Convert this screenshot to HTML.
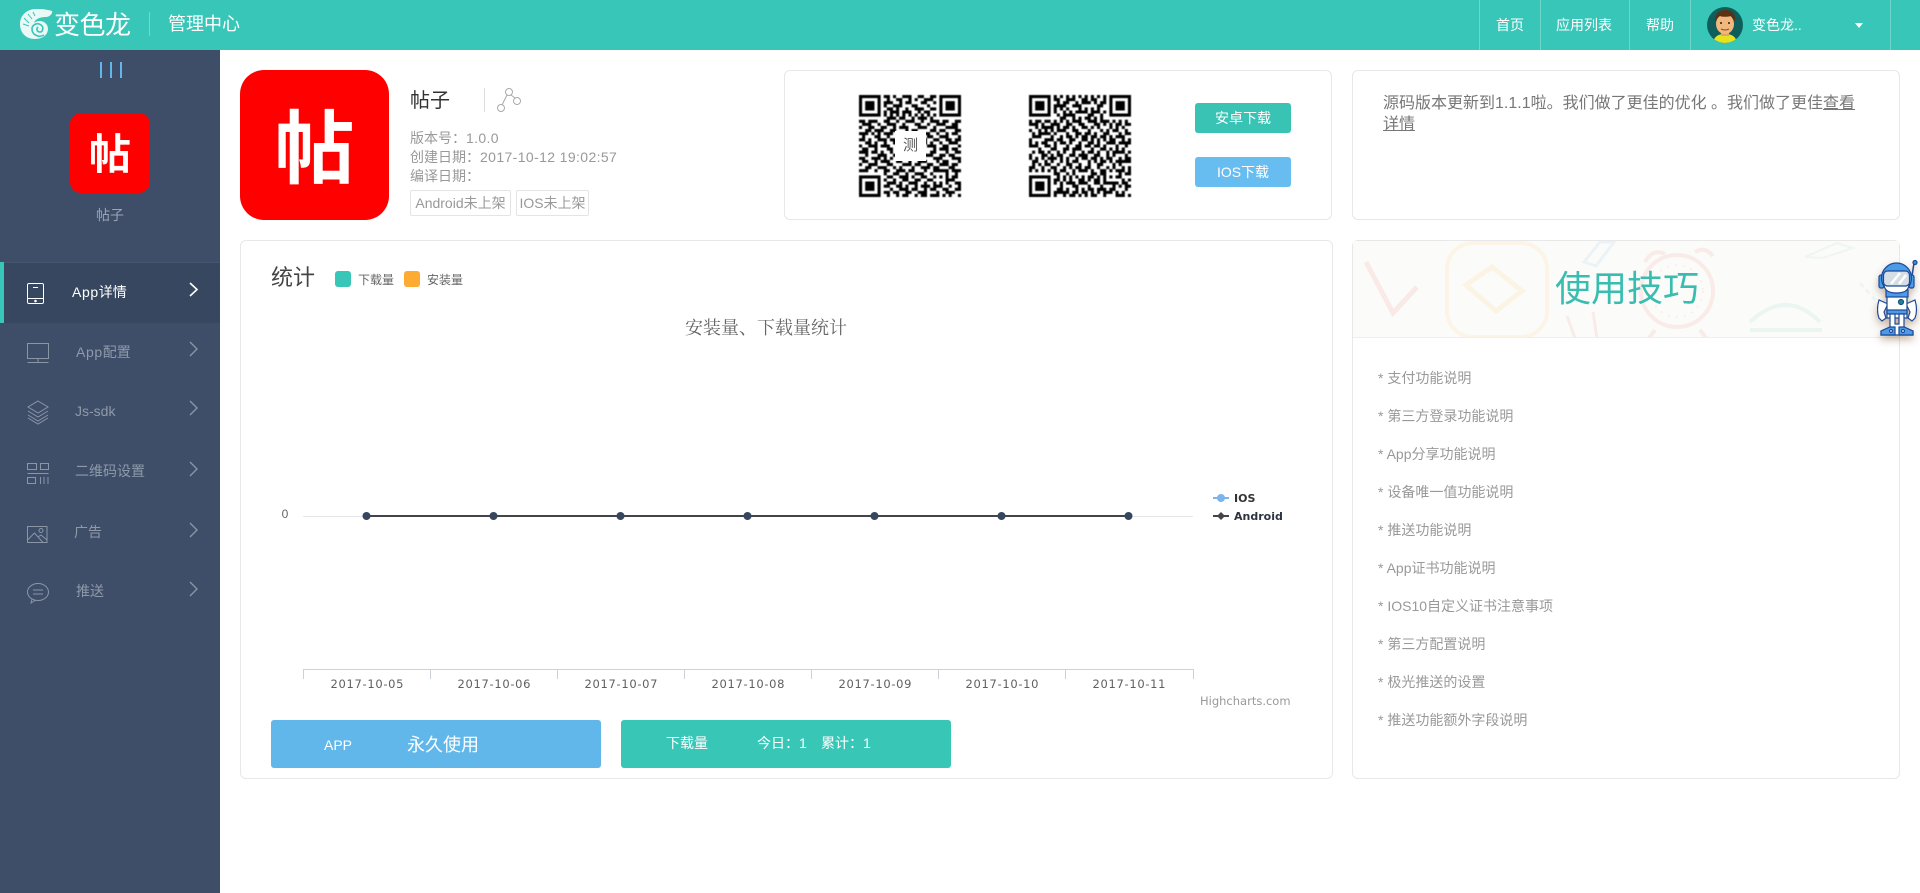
<!DOCTYPE html>
<html lang="zh"><head><meta charset="utf-8"><title>管理中心</title>
<style>
html,body{margin:0;padding:0;width:1920px;height:893px;overflow:hidden;background:#fff}
body{position:relative;font-family:"Liberation Sans","Noto Sans CJK SC",sans-serif;font-size:14px;color:#666}
.a,.t,svg.a{position:absolute}
.t{white-space:nowrap;line-height:20px}
.c{font-family:"Noto Sans CJK TC",sans-serif}
.card{position:absolute;box-sizing:border-box;border:1px solid #e8e8e8;border-radius:6px;background:#fff}
.hd{position:absolute;left:0;top:0;width:1920px;height:50px;background:#38c6b8}
.vl{position:absolute;top:0;width:1px;height:50px;background:#6fd6cc}
.sb{position:absolute;left:0;top:50px;width:220px;height:843px;background:#3e4e69}
.w{color:#fff}
.m{color:#8f99a9;font-size:14px}
.l{color:#999;font-size:14px}
.tag{position:absolute;box-sizing:border-box;top:190px;height:26px;border:1px solid #e4e4e4;border-radius:2px;color:#999;font-size:14px;line-height:24px;text-align:center;white-space:nowrap}
.btn{position:absolute;left:1195px;width:96px;height:30px;border-radius:3px;color:#fff;font-size:14px;line-height:30px;text-align:center}
.bar{position:absolute;top:720px;width:330px;height:48px;border-radius:3px}
.ls{letter-spacing:.6px}
</style></head><body>

<div class="hd"></div>
<svg class="a" style="left:20px;top:9px" width="33" height="31" viewBox="0 0 33 31">
<path d="M15 30C6 30 0 24 0 15 0 7 6 1 14 0c5-.5 11 0 18 2 1 2-2 6-6 6-6 0-11 2-12 6 3-3 10-3 13 2 3 6-1 14-12 14z" fill="#eaf8f6"/>
<path d="M24 26c-5 3-12 0-12-6 0-4 5-7 9-4 3 2 2 7-1 7s-4-3-2-5" fill="none" stroke="#38c6b8" stroke-width="1.6"/>
<path d="M4 9l5 5M8 5l4 5M3 15l6 2M13 3l2 4" stroke="#38c6b8" stroke-width="1"/>
</svg>
<div class="t w" style="left:54px;top:10px;font-size:26px;line-height:30px;letter-spacing:-.5px">变色龙</div>
<div class="a" style="left:149px;top:12px;width:1px;height:24px;background:#74d8ce"></div>
<div class="t w" style="left:168px;top:14px;font-size:18px">管理中心</div>

<div class="vl" style="left:1479px"></div><div class="vl" style="left:1540px"></div><div class="vl" style="left:1629px"></div><div class="vl" style="left:1690px"></div><div class="vl" style="left:1890px"></div>
<div class="t w" style="left:1496px;top:15px">首页</div>
<div class="t w" style="left:1556px;top:15px">应用列表</div>
<div class="t w" style="left:1646px;top:15px">帮助</div>
<svg class="a" style="left:1707px;top:7px" width="36" height="36" viewBox="0 0 36 36">
<defs><clipPath id="av"><circle cx="18" cy="18" r="18"/></clipPath></defs>
<g clip-path="url(#av)"><rect width="36" height="36" fill="#0e5f5c"/>
<path d="M6 36c1-7 6-9 12-9s11 2 12 9z" fill="#e8e21c"/>
<rect x="14" y="22" width="8" height="7" fill="#e3a468"/>
<ellipse cx="18" cy="17" rx="9" ry="10" fill="#f1b77c"/>
<path d="M8 15C8 5 14 3 19 3c6 0 10 4 9 12-2-3-3-5-4-6-4 1-9 1-11 0-2 1-3 3-5 6z" fill="#5b3014"/>
<circle cx="14" cy="16" r="1" fill="#222"/><circle cx="22" cy="16" r="1" fill="#222"/>
<path d="M14 22q4 2 8 0" stroke="#8a4b22" fill="none"/></g></svg>
<div class="t w" style="left:1752px;top:15px">变色龙..</div>
<div class="a" style="left:1855px;top:23px;width:0;height:0;border:4px solid transparent;border-top:5px solid #fff;border-bottom:0"></div>

<div class="sb"></div>
<div class="a" style="left:100px;top:62px;width:2px;height:16px;background:#62b7ea"></div>
<div class="a" style="left:110px;top:62px;width:2px;height:16px;background:#62b7ea"></div>
<div class="a" style="left:120px;top:62px;width:2px;height:16px;background:#62b7ea"></div>
<div class="a" style="left:70px;top:113px;width:80px;height:80px;border-radius:11px;background:#fe0000;color:#fff;font:700 42px/78px 'Noto Sans CJK SC',sans-serif;text-align:center">帖</div>
<div class="t" style="left:96px;top:205px;color:#9ba4b3;font-size:14px">帖子</div>

<div class="a" style="left:0;top:262px;width:220px;height:61px;background:#36475f;border-top:1px solid #475670;box-sizing:border-box"></div>
<div class="a" style="left:0;top:262px;width:4px;height:61px;background:#38c6b8"></div>

<svg class="a" style="left:0;top:270px" width="220" height="350" viewBox="0 270 220 350" fill="none" stroke="#8a95a6" stroke-width="1">
<g stroke="#fff"><rect x="27.5" y="283.5" width="16" height="20" rx="1.5"/><path d="M33 287.5h5M27.5 298.5h16"/><circle cx="35.5" cy="301" r=".8" fill="#fff"/><path d="M190 283l7 6.5-7 6.5" stroke-width="1.6"/></g>
<rect x="27.5" y="343.5" width="21" height="15"/><path d="M38 358.5v4M27.5 362.5h21"/>
<path d="M38 401l10 6-10 6-10-6zM28 411l10 6 10-6M28 415l10 6 10-6M28 418l10 6 10-6"/>
<path d="M27.5 463.5h9v6h-9zM40.5 463.5h8v6h-8zM27.5 473.5h21M27.5 477.5h8v6h-8zM40.5 477v7M44 477v7M48 477v7"/>
<rect x="27.5" y="526.5" width="19.5" height="16"/><circle cx="41" cy="530.5" r="2"/><path d="M27.5 540l7-7 8 9M38 537l3-2 6 5"/>
<ellipse cx="38" cy="592" rx="10.5" ry="8.5"/><path d="M32 599l-1 4 5-3M33 590h10M33 594h10"/>
<g stroke-width="1.4"><path d="M190 342l7 7-7 7M190 401l7 7-7 7M190 462l7 7-7 7M190 523l7 7-7 7M190 582l7 7-7 7"/></g>
</svg>
<div class="t w" style="left:72px;top:282px;font-size:14px"><span class="ls">App</span>详情</div>
<div class="t m" style="left:76px;top:342px"><span class="ls">App</span>配置</div>
<div class="t m" style="left:75px;top:401px">Js-sdk</div>
<div class="t m" style="left:75px;top:461px">二维码设置</div>
<div class="t m" style="left:74px;top:522px">广告</div>
<div class="t m" style="left:76px;top:581px">推送</div>

<div class="a" style="left:240px;top:70px;width:149px;height:150px;border-radius:24px;background:#fe0000;color:#fff;font:700 80px/146px 'Noto Sans CJK SC',sans-serif;text-align:center">帖</div>
<div class="t" style="left:410px;top:91px;font-size:20px;color:#333">帖子</div>
<div class="a" style="left:484px;top:88px;width:1px;height:24px;background:#ddd"></div>
<svg class="a" style="left:495px;top:86px" width="28" height="28" viewBox="495 86 28 28" fill="none" stroke="#aaa"><circle cx="509" cy="92" r="3.5"/><circle cx="517" cy="101" r="3.5"/><circle cx="501" cy="108" r="3.5"/><path d="M511 95l4 3M507 95l-5 10"/></svg>
<div class="t l" style="left:410px;top:128px">版本号<span class="c">：</span><span style="letter-spacing:.35px">1.0.0</span></div>
<div class="t l" style="left:410px;top:147px">创建日期<span class="c">：</span><span style="letter-spacing:.38px">2017-10-12 19:02:57</span></div>
<div class="t l" style="left:410px;top:166px">编译日期<span class="c">：</span></div>
<div class="tag" style="left:410px;width:101px">Android未上架</div>
<div class="tag" style="left:516px;width:73px">IOS未上架</div>

<div class="card" style="left:784px;top:70px;width:548px;height:150px"></div>
<svg width="0" height="0" style="position:absolute"><defs>
<g id="qr">
<path fill="#000" fill-rule="evenodd" d="M0 0h7v7H0zM1 1v5h5V1zM2 2h3v3H2zM26 0h7v7h-7zM27 1v5h5V1zM28 2h3v3h-3zM0 26h7v7H0zM1 27v5h5v-5zM2 28h3v3H2z"/>
<path stroke="#000" stroke-width="1" fill="none" d="M8 .5h2M11 .5h1M14 .5h3M19 .5h2M23 .5h2M9 1.5h1M12 1.5h2M16 1.5h1M18 1.5h1M21 1.5h3M8 2.5h3M13 2.5h1M15 2.5h2M20 2.5h2M24 2.5h1M8 3.5h1M11 3.5h3M17 3.5h2M22 3.5h1M9 4.5h2M12 4.5h1M15 4.5h1M18 4.5h3M23 4.5h2M8 5.5h1M10 5.5h3M14 5.5h3M19 5.5h1M21 5.5h2M8 6.5h1M10 6.5h1M12 6.5h1M14 6.5h1M16 6.5h1M18 6.5h1M20 6.5h1M22 6.5h1M24 6.5h1M9 7.5h3M13 7.5h2M17 7.5h1M19 7.5h3M23 7.5h1
M0 8.5h2M3 8.5h3M8 8.5h2M12 8.5h1M15 8.5h3M20 8.5h1M23 8.5h3M27 8.5h2M31 8.5h2M1 9.5h3M6 9.5h1M9 9.5h3M14 9.5h1M18 9.5h2M22 9.5h1M25 9.5h3M30 9.5h2M0 10.5h1M3 10.5h2M7 10.5h2M11 10.5h1M13 10.5h3M19 10.5h3M24 10.5h1M28 10.5h4M2 11.5h2M5 11.5h3M10 11.5h2M15 11.5h1M17 11.5h2M23 11.5h2M26 11.5h2M31 11.5h2M0 12.5h3M4 12.5h1M6 12.5h1M8 12.5h3M12 12.5h2M16 12.5h2M20 12.5h3M25 12.5h1M28 12.5h1M30 12.5h2M1 13.5h1M5 13.5h2M9 13.5h1M13 13.5h3M19 13.5h1M22 13.5h2M26 13.5h3M32 13.5h1
M0 14.5h2M3 14.5h1M6 14.5h3M10 14.5h2M14 14.5h1M17 14.5h3M21 14.5h1M24 14.5h2M28 14.5h2M31 14.5h2M2 15.5h2M5 15.5h1M8 15.5h1M11 15.5h3M16 15.5h2M20 15.5h2M23 15.5h1M26 15.5h1M29 15.5h3M0 16.5h1M3 16.5h3M7 16.5h3M12 16.5h1M15 16.5h3M19 16.5h1M22 16.5h3M27 16.5h2M32 16.5h1M1 17.5h2M5 17.5h1M9 17.5h2M13 17.5h2M18 17.5h3M24 17.5h1M26 17.5h3M30 17.5h2M0 18.5h3M4 18.5h2M7 18.5h1M10 18.5h1M12 18.5h3M16 18.5h1M19 18.5h2M23 18.5h2M28 18.5h1M31 18.5h2M2 19.5h1M6 19.5h3M11 19.5h2M15 19.5h2M18 19.5h1M21 19.5h3M26 19.5h2M29 19.5h2M0 20.5h2M4 20.5h3M8 20.5h1M10 20.5h1M13 20.5h3M17 20.5h2M20 20.5h1M24 20.5h3M30 20.5h3
M1 21.5h2M5 21.5h1M7 21.5h3M12 21.5h2M16 21.5h1M19 21.5h3M25 21.5h1M27 21.5h2M32 21.5h1M0 22.5h1M3 22.5h3M9 22.5h2M14 22.5h3M18 22.5h2M22 22.5h2M26 22.5h3M30 22.5h2M2 23.5h2M6 23.5h3M11 23.5h1M13 23.5h1M17 23.5h1M20 23.5h3M24 23.5h2M29 23.5h2M0 24.5h3M5 24.5h1M8 24.5h2M12 24.5h3M16 24.5h2M21 24.5h1M24 24.5h5M30 24.5h3M8 25.5h1M11 25.5h2M15 25.5h1M18 25.5h3M23 25.5h1M28 25.5h1M31 25.5h1M9 26.5h2M13 26.5h3M17 26.5h1M20 26.5h2M24 26.5h1M26 26.5h1M28 26.5h1M30 26.5h2M8 27.5h1M11 27.5h1M14 27.5h2M18 27.5h2M22 27.5h2M28 27.5h3M9 28.5h3M13 28.5h1M16 28.5h3M21 28.5h1M24 28.5h1M26 28.5h1M28 28.5h1M31 28.5h2
M8 29.5h2M12 29.5h2M15 29.5h1M18 29.5h1M20 29.5h3M24 29.5h3M29 29.5h1M32 29.5h1M10 30.5h1M13 30.5h3M17 30.5h2M21 30.5h1M23 30.5h2M27 30.5h2M31 30.5h2M8 31.5h2M11 31.5h2M15 31.5h2M19 31.5h3M25 31.5h1M28 31.5h3M9 32.5h1M12 32.5h1M14 32.5h2M18 32.5h1M20 32.5h2M23 32.5h3M27 32.5h1M29 32.5h1M32 32.5h1"/>
</g></defs></svg>
<svg class="a" style="left:859px;top:95px;filter:blur(.4px)" width="102" height="102" viewBox="0 0 33 33"><use href="#qr"/></svg>
<div class="a" style="left:895px;top:131px;width:31px;height:30px;background:#fff;color:#555;font-size:15px;line-height:30px;text-align:center">测</div>
<svg class="a" style="left:1029px;top:95px;filter:blur(.4px)" width="102" height="102" viewBox="0 0 33 33"><g transform="matrix(0 1 1 0 0 0)"><use href="#qr"/></g></svg>
<div class="btn" style="top:103px;background:#38c3b4">安卓下载</div>
<div class="btn" style="top:157px;background:#67bdf0">IOS下载</div>

<div class="card" style="left:1352px;top:70px;width:548px;height:150px"></div>
<div class="a" style="left:1383px;top:93px;width:490px;font-size:16px;line-height:21px;color:#777;white-space:nowrap">源码版本更新到1.1.1啦。我们做了更佳的优化 。我们做了更佳<u>查看<br>详情</u></div>

<div class="card" style="left:240px;top:240px;width:1093px;height:539px"></div>
<div class="t" style="left:271px;top:265px;font-size:22px;line-height:26px;color:#444">统计</div>
<div class="a" style="left:335px;top:271px;width:16px;height:16px;border-radius:3px;background:#38c6b8"></div>
<div class="t" style="left:358px;top:270px;font-size:12px;color:#666">下载量</div>
<div class="a" style="left:404px;top:271px;width:16px;height:16px;border-radius:3px;background:#fdab33"></div>
<div class="t" style="left:427px;top:270px;font-size:12px;color:#666">安装量</div>

<svg class="a" style="left:0;top:0" width="1920" height="893" viewBox="0 0 1920 893" fill="none">
<text x="766" y="334" text-anchor="middle" font-family="'Liberation Serif','Noto Serif CJK SC',serif" font-size="18" fill="#666">安装量、下载量统计</text>
<path d="M303 516.5h890" stroke="#e6e6e6"/>
<text x="285" y="518" text-anchor="middle" font-family="'Liberation Sans',sans-serif" font-size="12" fill="#666">0</text>
<path d="M366.5 516h762" stroke="#434348" stroke-width="2"/>
<g fill="#36465f"><circle cx="366.5" cy="516" r="4"/><circle cx="493.5" cy="516" r="4"/><circle cx="620.5" cy="516" r="4"/><circle cx="747.5" cy="516" r="4"/><circle cx="874.5" cy="516" r="4"/><circle cx="1001.5" cy="516" r="4"/><circle cx="1128.5" cy="516" r="4"/></g>
<path d="M303.5 669.5h890M303.5 669v10M430.5 669v10M557.5 669v10M684.5 669v10M811.5 669v10M938.5 669v10M1065.5 669v10M1193.5 669v10" stroke="#ccd2da"/>
<g font-family="'DejaVu Sans',sans-serif" font-size="11.5" fill="#606060" text-anchor="middle">
<text x="367" y="688" textLength="73">2017-10-05</text><text x="494" y="688" textLength="73">2017-10-06</text><text x="621" y="688" textLength="73">2017-10-07</text><text x="748" y="688" textLength="73">2017-10-08</text><text x="875" y="688" textLength="73">2017-10-09</text><text x="1002" y="688" textLength="73">2017-10-10</text><text x="1129" y="688" textLength="73">2017-10-11</text>
</g>
<path d="M1213 498h16" stroke="#7cb5ec" stroke-width="2"/><circle cx="1221" cy="498" r="4" fill="#7cb5ec"/>
<path d="M1213 516h16" stroke="#434348" stroke-width="2"/><path d="M1221 512l4 4-4 4-4-4z" fill="#434348"/>
<g font-family="'DejaVu Sans',sans-serif" font-size="11" font-weight="700" fill="#333"><text x="1234" y="502">IOS</text><text x="1234" y="520" fill="#2c3442">Android</text></g>
<text x="1200" y="705" font-family="'DejaVu Sans',sans-serif" font-size="11.5" fill="#999">Highcharts.com</text>
</svg>

<div class="bar" style="left:271px;background:#62b7ea"></div>
<div class="t w" style="left:324px;top:735px;font-size:14px">APP</div>
<div class="t w" style="left:407px;top:735px;font-size:18px">永久使用</div>
<div class="bar" style="left:621px;background:#38c6b6"></div>
<div class="t w" style="left:666px;top:733px;font-size:14px">下载量</div>
<div class="t w" style="left:757px;top:733px;font-size:14px">今日<span class="c">：</span>1</div>
<div class="t w" style="left:821px;top:733px;font-size:14px">累计<span class="c">：</span>1</div>

<div class="card" style="left:1352px;top:240px;width:548px;height:539px"></div>
<svg class="a" style="left:1353px;top:241px" width="546" height="97" viewBox="1353 241 546 97" fill="none">
<rect x="1353" y="241" width="546" height="97" fill="#fbfbf9"/>
<g opacity=".55">
<path d="M1366 262l27 51 24-26" stroke="#f9dcd9" stroke-width="5"/>
<rect x="1447" y="243" width="100" height="94" rx="26" stroke="#fbf0d9" stroke-width="4"/>
<path d="M1466 285l26-18 30 24-26 20z" stroke="#fbefd4" stroke-width="5"/>
<circle cx="1677" cy="291" r="36" stroke="#f9dedb" stroke-width="4"/><circle cx="1677" cy="291" r="26" stroke="#f9e6e3" stroke-width="2" stroke-dasharray="2 6"/>
<path d="M1645 262q8-14 20-8M1695 252q10-6 18 4M1655 330l-6 8M1700 330l6 8" stroke="#f9dedb" stroke-width="4"/>
<path d="M1584 262l16-20h14l-18 24z" stroke="#dfeef6" stroke-width="3"/>
<path d="M1750 322q36-34 70 0M1750 330h72" stroke="#dff2ee" stroke-width="4"/>
<path d="M1805 257l32-14 16 5-30 10z" stroke="#e4f3f0" stroke-width="2"/>
<path d="M1575 338l-8-22M1597 338l-4-26" stroke="#f9dedb" stroke-width="3"/>
<path d="M1860 283l30 34" stroke="#e3f1f6" stroke-width="3" stroke-dasharray="5 4"/>
</g>
<path d="M1353 337.500h546" stroke="#eee"/>
</svg>
<div class="t" style="left:1555px;top:267px;font-size:36px;line-height:44px;color:#38bdb0">使用技巧</div>
<div class="t l" style="left:1378px;top:368px">* 支付功能说明</div>
<div class="t l" style="left:1378px;top:406px">* 第三方登录功能说明</div>
<div class="t l" style="left:1378px;top:444px">* App分享功能说明</div>
<div class="t l" style="left:1378px;top:482px">* 设备唯一值功能说明</div>
<div class="t l" style="left:1378px;top:520px">* 推送功能说明</div>
<div class="t l" style="left:1378px;top:558px">* App证书功能说明</div>
<div class="t l" style="left:1378px;top:596px">* IOS10自定义证书注意事项</div>
<div class="t l" style="left:1378px;top:634px">* 第三方配置说明</div>
<div class="t l" style="left:1378px;top:672px">* 极光推送的设置</div>
<div class="t l" style="left:1378px;top:710px">* 推送功能额外字段说明</div>

<svg class="a" style="left:1877px;top:260px;filter:drop-shadow(0 4px 4px rgba(130,90,50,.45))" width="41" height="78" viewBox="0 0 41 78" fill="none" stroke="#1f4a96" stroke-width="1.2">
<path d="M35 16l2-13" stroke-width="1.5"/><circle cx="38" cy="2.500" r="2" fill="#3e8fe0"/>
<path d="M2 40q-3 10 0 18l3 3 4-3-2-6 4-8z" fill="#fff"/><path d="M38 40q3 10 0 18l-3 3-4-3 2-6-4-8z" fill="#fff"/>
<rect x="10" y="30" width="20" height="28" fill="#fff"/>
<rect x="9" y="30" width="22" height="7" fill="#4a9be8"/><rect x="10" y="50" width="20" height="4" fill="#4a9be8"/>
<circle cx="24" cy="42" r="2.500" fill="#178a8c"/>
<rect x="2" y="15" width="5" height="13" rx="2" fill="#4a9be8"/><rect x="32" y="15" width="5" height="13" rx="2" fill="#4a9be8"/>
<circle cx="19.500" cy="18" r="15" fill="#4a9be8"/><path d="M7 24q0 9 12.500 9T32 24z" fill="#fff"/>
<rect x="6.500" y="11" width="26" height="15" rx="4" fill="#d5dee5"/><path d="M14 24l9-11M22 24l7-9" stroke="#fff" stroke-width="2.500"/>
<path d="M13 54h5v10h4V54h5v13l9 4v4H4v-4l9-4z" fill="#fff"/>
<path d="M4 71l9-4h5v8H4zM36 71l-9-4h-5v8h14z" fill="#4a9be8"/>
<circle cx="14" cy="71" r="1.500" fill="#fff"/><circle cx="26" cy="71" r="1.500" fill="#fff"/>
</svg>
</body></html>
